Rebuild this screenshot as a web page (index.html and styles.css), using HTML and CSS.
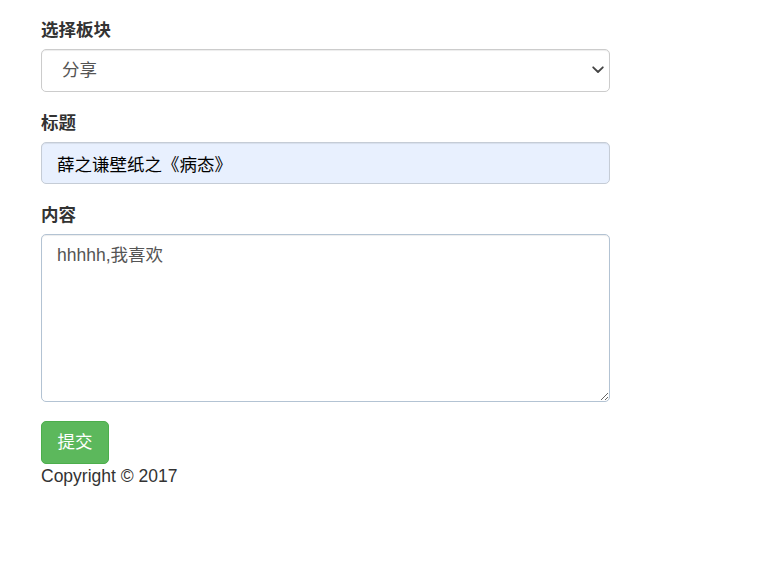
FILE: index.html
```html
<!DOCTYPE html>
<html lang="zh-CN">
<head>
<meta charset="utf-8">
<title>发帖</title>
<link rel="stylesheet" href="styles.css">
</head>
<body>
<div class="container">
  <form class="post-form">
    <div class="form-group">
      <label class="form-label">选择板块</label>
      <div class="select-wrap">
        <select class="form-control select-control">
          <option>分享</option>
        </select>
        <svg class="select-arrow" width="12" height="8" viewBox="0 0 12 8" aria-hidden="true">
          <path d="M1.2 1.3 L6 6 L10.8 1.3" fill="none" stroke="#444" stroke-width="1.8" stroke-linecap="round" stroke-linejoin="round"/>
        </svg>
      </div>
    </div>
    <div class="form-group">
      <label class="form-label">标题</label>
      <input class="form-control input-autofill" type="text" value="薛之谦壁纸之《病态》">
    </div>
    <div class="form-group">
      <label class="form-label">内容</label>
      <textarea class="form-control textarea-control">hhhhh,我喜欢</textarea>
    </div>
    <button type="button" class="btn-submit">提交</button>
  </form>
  <div class="footer">Copyright © 2017</div>
</div>
</body>
</html>
```
FILE: styles.css
```css
* { box-sizing: border-box; }
html, body {
  margin: 0;
  padding: 0;
  background: #fff;
}
body {
  font-family: "Liberation Sans", "Noto Sans CJK SC", Arial, sans-serif;
  font-size: 17.5px;
  line-height: 25px;
  color: #333;
}
.container {
  padding: 17.5px 0 0 41px;
  width: 610px;
}
.post-form { margin: 0; }
.form-group {
  margin-bottom: 18.75px;
  display: flex;
  flex-direction: column;
}
.form-label {
  display: block;
  font-weight: bold;
  margin-bottom: 6.25px;
  line-height: 25px;
}
.form-control {
  display: block;
  width: 100%;
  height: 42.5px;
  padding: 7.5px 15px;
  font-family: "Liberation Sans", "Noto Sans CJK SC", Arial, sans-serif;
  font-size: 17.5px;
  line-height: 25px;
  color: #555;
  background: #fff;
  border: 1.25px solid #ccc;
  border-radius: 5px;
  box-shadow: inset 0 1px 1px rgba(0,0,0,.075);
  margin: 0;
}
.select-wrap {
  position: relative;
}
.select-control {
  -webkit-appearance: none;
  appearance: none;
  padding-left: 20px;
  height: 43px;
}
.select-arrow {
  position: absolute;
  right: 6px;
  top: 17px;
  pointer-events: none;
}
.input-autofill {
  background: #e8f0fe;
  color: #000;
  border-color: #c5ccd6;
}
.textarea-control {
  height: 168px;
  resize: vertical;
  border-color: #b3c3d3;
}
.btn-submit {
  display: block;
  height: 42.5px;
  padding: 7.5px 15.5px;
  font-family: "Liberation Sans", "Noto Sans CJK SC", Arial, sans-serif;
  font-size: 17.5px;
  line-height: 25px;
  color: #fff;
  background: #5cb85c;
  border: 1.25px solid #4cae4c;
  border-radius: 5px;
  margin: 0;
  cursor: pointer;
}
.footer {
  line-height: 25px;
  color: #333;
}
```
